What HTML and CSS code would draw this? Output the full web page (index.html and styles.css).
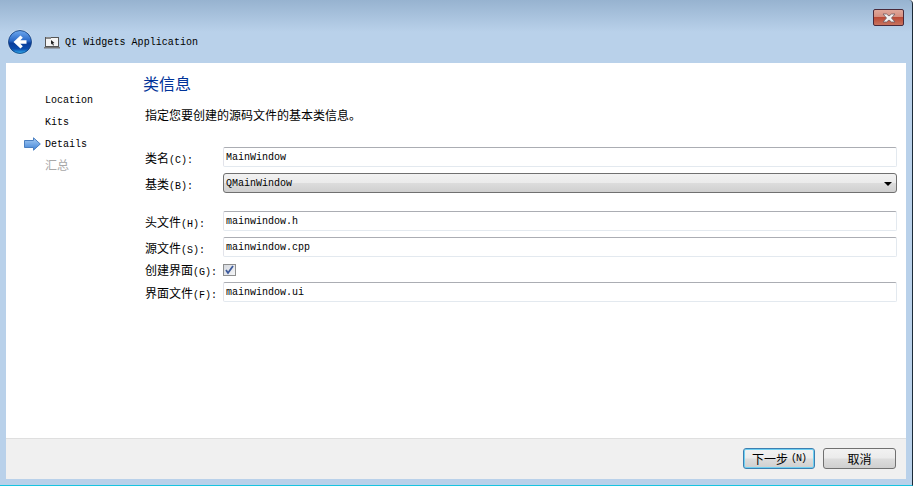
FILE: index.html
```html
<!DOCTYPE html>
<html lang="zh">
<head>
<meta charset="utf-8">
<title>Qt Widgets Application</title>
<link rel="stylesheet" href="styles.css">
</head>
<body>
<div class="window">
  <div class="titlebar">
    <button class="close" aria-label="close">
      <svg width="16" height="10" viewBox="0 0 16 10"><path d="M2 1h3.500L8 3l2.500-2H14l-3.500 4L14 9h-3.500L8 7 5.500 9H2l3.500-4z" fill="#f2f2f2" stroke="#6f5a60" stroke-width=".8"/></svg>
    </button>
  </div>
  <div class="navbar">
    <svg class="back" width="26" height="26" viewBox="0 0 26 26">
      <defs>
        <linearGradient id="bg" x1="0" y1="0" x2="0" y2="1"><stop offset="0" stop-color="#6ea8ee"/><stop offset=".45" stop-color="#2a69c8"/><stop offset=".55" stop-color="#0a3d9a"/><stop offset=".8" stop-color="#0b4cae"/><stop offset="1" stop-color="#35b4f0"/></linearGradient>
      </defs>
      <circle cx="13" cy="13" r="12.500" fill="#dce8f5" opacity=".7"/>
      <circle cx="13" cy="13" r="11.500" fill="url(#bg)" stroke="#0c3a78" stroke-width=".8"/>
      <path d="M13.500 6.500l2.300 2.200-2.500 2.500h6.200v3.600h-6.200l2.500 2.500-2.300 2.200L6.500 13z" fill="#fff"/>
    </svg>
    <svg class="appicon" width="16" height="13" viewBox="0 0 16 13">
      <rect x="1.500" y="1.500" width="13" height="9" fill="#f4f4f4" stroke="#555"/>
      <rect x="2" y="1" width="5" height="2" fill="#8a8a8a"/>
      <path d="M7 4l3.500 3-1.500.2 1 2-1 .4-1-2L7 8.500z" fill="#222"/>
      <rect x="0" y="11" width="16" height="1.500" fill="#777"/>
    </svg>
    <span class="apptitle">Qt Widgets Application</span>
  </div>
  <div class="client">
    <div class="main">
      <nav class="steps">
        <div class="step">Location</div>
        <div class="step">Kits</div>
        <div class="step current">
          <svg class="arrow" width="17" height="14" viewBox="0 0 17 14">
            <defs><linearGradient id="ag" x1="0" y1="0" x2="0" y2="1"><stop offset="0" stop-color="#a9cdf3"/><stop offset="1" stop-color="#3f83d8"/></linearGradient></defs>
            <path d="M.5 3.500h9V.8L16.300 7l-6.800 6.200v-2.700h-9z" fill="url(#ag)" stroke="#4a7fc0"/>
          </svg>
          Details
        </div>
        <div class="step pending"><span class="cjk">汇总</span></div>
      </nav>
      <section class="page">
        <h1 class="heading">类信息</h1>
        <p class="intro">指定您要创建的源码文件的基本类信息。</p>
        <div class="form">
          <label class="lbl"><span class="cjk">类名</span>(C):</label>
          <div class="input">MainWindow</div>
          <label class="lbl"><span class="cjk">基类</span>(B):</label>
          <div class="combo">QMainWindow<i class="caret"></i></div>
          <div class="spacer"></div>
          <label class="lbl"><span class="cjk">头文件</span>(H):</label>
          <div class="input">mainwindow.h</div>
          <label class="lbl"><span class="cjk">源文件</span>(S):</label>
          <div class="input">mainwindow.cpp</div>
          <label class="lbl"><span class="cjk">创建界面</span>(G):</label>
          <div class="checkrow">
            <span class="check">
              <svg width="11" height="10" viewBox="0 0 11 10"><path d="M2 5l2 3L9 1" fill="none" stroke="#3d5a9c" stroke-width="1.800"/></svg>
            </span>
          </div>
          <label class="lbl"><span class="cjk">界面文件</span>(F):</label>
          <div class="input">mainwindow.ui</div>
        </div>
      </section>
    </div>
    <footer class="footer">
      <button class="btn primary"><span class="cjk">下一步</span><span class="mnemonic">(N)</span></button>
      <button class="btn"><span class="cjk">取消</span></button>
    </footer>
  </div>
</div>
</body>
</html>
```

FILE: styles.css
```css
* { box-sizing: border-box; }
html, body { margin: 0; height: 100%; background: #fff; overflow: hidden; }
body {
  font-family: "Liberation Mono", "Noto Sans CJK SC", monospace;
  font-size: 10px;
  color: #000;
}
.cjk { font-family: "Noto Sans CJK SC", sans-serif; font-size: 12px; line-height: 1; }
.window {
  width: 913px;
  height: 486px;
  display: flex;
  flex-direction: column;
  background: linear-gradient(#97b3d0 0, #b9d1ea 32px, #b9d1ea 100%);
  border-right: 1px solid #1b2a38;
  border-bottom: 1px solid #18c4e0;
  border-top-right-radius: 4px;
  padding: 0 6px 6px 6px;
}
.titlebar {
  height: 25px;
  flex: none;
  display: flex;
  justify-content: flex-end;
  padding: 9px 0 0;
}
.close {
  width: 31px;
  height: 17px;
  margin-right: 2px;
  padding: 0;
  border: 1px solid #4a2a3a;
  border-radius: 2px;
  background: linear-gradient(#e0a79a 0, #d58f80 45%, #bb4a36 50%, #c8735f 100%);
  display: flex;
  align-items: center;
  justify-content: center;
}
.navbar {
  height: 38px;
  flex: none;
  display: flex;
  align-items: center;
  margin-left: -6px;
  padding: 0 0 4px 7px;
}
.back { margin-right: 11px; }
.appicon { margin-right: 5px; }
.apptitle { letter-spacing: .05px; }
.client {
  flex: 1;
  min-height: 0;
  background: #fff;
  display: flex;
  flex-direction: column;
}
.main { flex: 1; display: flex; min-height: 0; }
.steps { width: 137px; flex: none; padding: 27px 0 0 39px; }
.step { height: 22px; line-height: 22px; position: relative; }
.step.pending { color: #a8a8a8; padding-top: 1px; }
.arrow { position: absolute; left: -21px; top: 3px; }
.page { flex: 1; min-width: 0; padding: 8px 9px 0 0; }
.heading {
  margin: 0;
  font: 400 16px/24px "Noto Sans CJK SC", sans-serif;
  color: #003399;
}
.intro {
  margin: 11px 0 0 2px;
  font: 400 12px/18px "Noto Sans CJK SC", sans-serif;
}
.form {
  margin: 23px 0 0 2px;
  display: grid;
  grid-template-columns: 78px 674px;
  row-gap: 6px;
  align-items: center;
}
.lbl { height: 13px; padding-top: 1px; line-height: 13px; white-space: nowrap; }
.spacer { grid-column: 1 / -1; height: 6px; }
.input {
  height: 20px;
  line-height: 20px;
  padding-left: 2px;
  border: 1px solid #e3e9ef;
  border-top-color: #abadb3;
  border-left-color: #e2e3ea;
  border-radius: 2px;
  background: #fff;
}
.combo {
  height: 20px;
  line-height: 20px;
  padding-left: 2px;
  border: 1px solid #707070;
  border-radius: 3px;
  background: linear-gradient(#f2f2f2 0, #ebebeb 48%, #dcdcdc 52%, #cfcfcf 100%);
  position: relative;
}
.caret {
  position: absolute;
  right: 4px;
  top: 8px;
  border: 4px solid transparent;
  border-top: 4px solid #000;
  border-bottom: 0;
}
.checkrow { height: 13px; display: flex; align-items: flex-end; }
.check {
  width: 13px;
  height: 12px;
  border: 1px solid #8e8f8f;
  background: linear-gradient(135deg, #d6d9df, #f4f5f7);
  display: flex;
  align-items: center;
  justify-content: center;
}
.footer {
  flex: none;
  height: 41px;
  background: #f0f0f0;
  border-top: 1px solid #dfdfdf;
  display: flex;
  justify-content: flex-end;
  align-items: flex-start;
  gap: 8px;
  padding: 9px 10px 0 0;
}
.btn {
  width: 73px;
  height: 21px;
  padding: 0;
  font: inherit;
  color: #000;
  border: 1px solid #707070;
  border-radius: 3px;
  background: linear-gradient(#f2f2f2 0, #ebebeb 48%, #dddddd 52%, #cfcfcf 100%);
  display: flex;
  align-items: center;
  justify-content: center;
}
.btn.primary {
  width: 72px;
  border-color: #3c7fb1;
  box-shadow: inset 0 0 0 1px #6fd0f2;
}
.mnemonic { margin-left: 3px; letter-spacing: -1px; }
```
